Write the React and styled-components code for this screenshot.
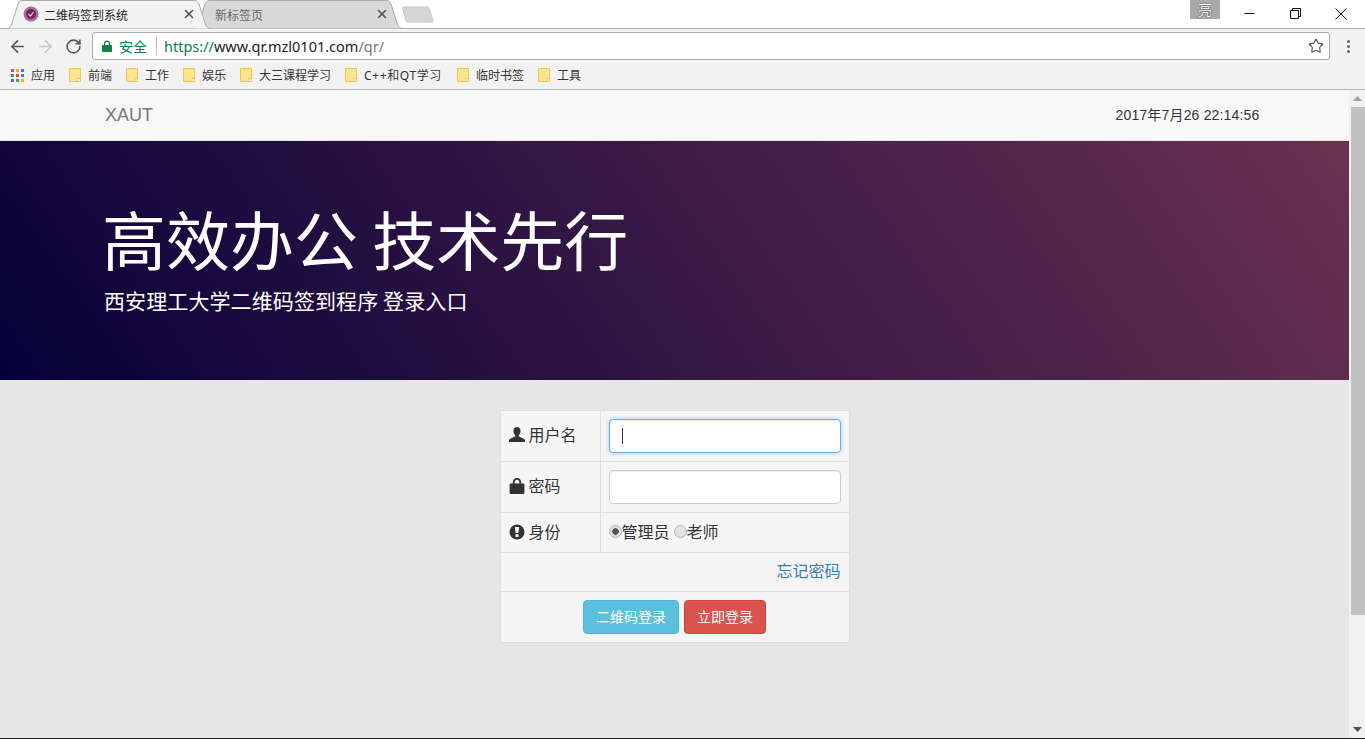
import React from "react";
import styled, { createGlobalStyle } from "styled-components";
import { ArrowLeft, ArrowRight, RotateCw, Star, X } from "lucide-react";

const cjk = `"Noto Sans CJK SC", "Liberation Sans", sans-serif`;
const ui = `"Noto Sans", "Noto Sans CJK SC", sans-serif`;

const GlobalStyle = createGlobalStyle`
  html, body {
    margin: 0;
    height: 100%;
    overflow: hidden;
    font-family: "Liberation Sans", "Noto Sans CJK SC", sans-serif;
  }
  * { box-sizing: border-box; }
`;

const Screen = styled.div`
  width: 1365px;
  height: 739px;
  display: flex;
  flex-direction: column;
  overflow: hidden;
  background: #fff;
`;

/* browser chrome */
const TabStrip = styled.div`
  height: 29px;
  flex: none;
  display: flex;
  position: relative;
  padding-left: 6px;
  background: #fff;
  border-bottom: 1px solid #aaa;
`;
const Tab = styled.div`
  position: relative;
  width: ${(p) => p.$w}px;
  height: 29px;
  margin-right: ${(p) => p.$mr || 0}px;
  display: flex;
  align-items: center;
  padding: 0 ${(p) => p.$pr}px 1px ${(p) => p.$pl}px;
  z-index: ${(p) => (p.$active ? 2 : 1)};
  svg.shape {
    position: absolute;
    left: 0;
    top: 0;
  }
`;
const Favicon = styled.svg`
  position: relative;
  width: 16px;
  height: 16px;
  margin-right: 5px;
  flex: none;
`;
const TabTitle = styled.span`
  position: relative;
  font: 12px ${cjk};
  color: ${(p) => (p.$active ? "#222" : "#666")};
  flex: 1;
  white-space: nowrap;
`;
const TabClose = styled(X)`
  position: relative;
  color: #555;
  flex: none;
`;
const NewTab = styled.svg`
  margin: 6px 0 0 -3px;
  flex: none;
`;
const WindowControls = styled.div`
  position: absolute;
  right: 1.5px;
  top: 0;
  display: flex;
  align-items: flex-start;
`;
const UserBadge = styled.div`
  width: 30px;
  height: 19px;
  margin-right: 7px;
  background: #a9a9a9;
  color: #fff;
  font: 14px/18px ${cjk};
  text-align: center;
  text-shadow: 0 0 1px #333, 0 0 1px #333;
`;
const WinButton = styled.div`
  width: 45.5px;
  height: 27px;
  display: flex;
  align-items: center;
  justify-content: center;
`;
const Toolbar = styled.div`
  height: 33px;
  flex: none;
  display: flex;
  align-items: center;
  background: #f2f2f2;
  padding: 1px 0 0 8px;
`;
const NavIcon = styled.div`
  width: 28px;
  height: 20px;
  flex: none;
  margin-right: ${(p) => p.$mr || 0}px;
  display: flex;
  align-items: center;
  padding-left: ${(p) => p.$pl || 0}px;
  color: ${(p) => (p.$off ? "#c9c9c9" : "#5a5a5a")};
`;
const Omnibox = styled.div`
  width: 1238px;
  height: 28px;
  flex: none;
  margin-left: -2px;
  display: flex;
  align-items: center;
  background: #fff;
  border: 1px solid #a9a9a9;
  border-radius: 3px;
  padding-left: 9px;
`;
const Secure = styled.span`
  font: 14px ${cjk};
  color: #0b8043;
  margin-left: 7px;
  padding-right: 9px;
  border-right: 1px solid #bbb;
  line-height: 18px;
`;
const Url = styled.span`
  font: 14.5px "Noto Sans", "Open Sans", sans-serif;
  margin-left: 7px;
  flex: 1;
  color: #0b8043;
  b { font-weight: 400; color: #222; }
  i { font-style: normal; color: #777; }
`;
const StarIcon = styled(Star)`
  color: #555;
  margin-right: 5px;
`;
const MenuDots = styled.div`
  width: 3px;
  margin-left: 17px;
  display: flex;
  flex-direction: column;
  gap: 2px;
  span {
    height: 3px;
    background: #666;
    border-radius: 50%;
  }
`;
const Bookmarks = styled.div`
  height: 28px;
  flex: none;
  display: flex;
  align-items: center;
  padding: 0 0 1px 11px;
  background: #f2f2f2;
  border-bottom: 1px solid #b4b4b4;
`;
const Bookmark = styled.div`
  display: flex;
  align-items: center;
  margin-right: ${(p) => p.$mr}px;
  svg { margin-right: 7px; flex: none; }
`;
const BookmarkLabel = styled.span`
  padding-top: 2px;
  font: 12px/16px ${ui};
  letter-spacing: ${(p) => p.$ls || 0}px;
  color: #333;
  white-space: nowrap;
`;

/* page */
const Viewport = styled.div`
  flex: 1;
  min-height: 0;
  display: flex;
`;
const Page = styled.div`
  flex: 1;
  min-width: 0;
  display: flex;
  flex-direction: column;
  background: #e6e6e6;
`;
const Navbar = styled.nav`
  height: 51px;
  flex: none;
  display: flex;
  align-items: center;
  justify-content: space-between;
  padding: 0 89.5px 0 105px;
  background: #f8f8f8;
  border-bottom: 1px solid #e7e7e7;
`;
const Brand = styled.a`
  font-size: 18px;
  color: #777;
`;
const Clock = styled.span`
  font-size: 14px;
  letter-spacing: 0.17px;
  color: #333;
  padding-bottom: 2px;
`;
const Banner = styled.header`
  height: 239px;
  flex: none;
  padding: 49px 0 0 104px;
  color: #fff;
  background: linear-gradient(55deg, #05003a 0%, #6b3150 100%);
`;
const Heading = styled.h1`
  margin: 0 0 0 -2px;
  font: 400 64px/94px ${cjk};
`;
const Lead = styled.p`
  margin: 0;
  font: 400 21px/32px ${cjk};
  letter-spacing: 0.1px;
`;
const LoginTable = styled.table`
  width: 350px;
  margin: 30px auto 0;
  border-collapse: collapse;
  table-layout: fixed;
  background: #f5f5f5;
  font: 16px ${cjk};
  color: #333;
  td {
    border: 1px solid #ddd;
    padding: 0 8px;
    vertical-align: middle;
  }
`;
const Row = styled.tr`
  height: ${(p) => p.$h}px;
`;
const LabelCell = styled.td`
  width: 100px;
  && {
    padding-bottom: 4px;
  }
  svg {
    vertical-align: -2px;
    margin-right: 4px;
  }
`;
const RightCell = styled.td`
  text-align: right;
  && {
    padding-bottom: 4px;
  }
`;
const CenterCell = styled.td`
  text-align: center;
`;
const FieldWrap = styled.div`
  position: relative;
  height: 34px;
`;
const TextInput = styled.input`
  display: block;
  width: 100%;
  height: 34px;
  padding: 6px 12px;
  background: #fff;
  border: 1px solid ${(p) => (p.$focus ? "#66afe9" : "#ccc")};
  border-radius: 4px;
  outline: none;
  box-shadow: inset 0 1px 1px rgba(0, 0, 0, 0.075)
    ${(p) => (p.$focus ? ", 0 0 4px rgba(102, 175, 233, 0.6)" : "")};
`;
const Caret = styled.span`
  position: absolute;
  left: 13px;
  top: 9px;
  width: 1px;
  height: 16px;
  background: #333;
`;
const RadioRow = styled.div`
  display: flex;
  align-items: center;
  padding-bottom: 4px;
`;
const Radio = styled.span`
  width: 13px;
  height: 13px;
  flex: none;
  margin-top: 2px;
  border-radius: 50%;
  border: 1px solid #b5b5b5;
  background: ${(p) =>
    p.$checked
      ? "radial-gradient(circle, #555 0 3px, #e0e0e0 3.6px)"
      : "#e2e2e2"};
`;
const RadioLabel = styled.span`
  margin-right: 4px;
`;
const Link = styled.a`
  color: #337ab7;
`;
const Button = styled.button`
  height: 34px;
  padding: 0 12px 2px;
  margin: 0 2.5px;
  font: 14px ${cjk};
  color: #fff;
  background: ${(p) => (p.$danger ? "#d9534f" : "#5bc0de")};
  border: 1px solid ${(p) => (p.$danger ? "#d43f3a" : "#46b8da")};
  border-radius: 4px;
`;
const Scrollbar = styled.aside`
  width: 16px;
  flex: none;
  display: flex;
  flex-direction: column;
  align-items: center;
  background: #f1f1f1;
`;
const ScrollArrow = styled.svg`
  flex: none;
  margin: ${(p) => p.$m};
`;
const ScrollThumb = styled.div`
  width: 14px;
  height: 508px;
  align-self: flex-end;
  margin-bottom: auto;
  background: #c1c1c1;
`;
const BottomEdge = styled.div`
  height: 1px;
  flex: none;
  background: #222;
`;

const TabShape = ({ w, fill, stroke }) => (
  <svg className="shape" width={w} height="29" viewBox={`0 0 ${w} 29`}>
    <path
      d={`M0 28.5 C4 28.5 5 26 6 23 L12 4 C13 1.5 14 .5 17 .5 L${w - 17} .5 C${w - 14} .5 ${w - 13} 1.5 ${w - 12} 4 L${w - 6} 23 C${w - 5} 26 ${w - 4} 28.5 ${w} 28.5`}
      fill={fill}
      stroke={stroke}
    />
  </svg>
);

const Folder = () => (
  <svg width="12" height="14" viewBox="0 0 12 14">
    <path d="M.5.5h11v13H.5z" fill="#fde58f" stroke="#eec64f" />
    <path d="M9 13.5v-3h2.5v3z" fill="#fff" stroke="#eec64f" />
  </svg>
);

const AppsGrid = () => {
  const colors = ["#e8453c", "#f4b400", "#3b78e7", "#34a853", "#e8453c", "#3b78e7", "#3b78e7", "#34a853", "#f4b400"];
  return (
    <svg width="13" height="13" viewBox="0 0 13 13">
      {colors.map((c, i) => (
        <rect key={i} x={(i % 3) * 5} y={Math.floor(i / 3) * 5} width="3" height="3" fill={c} />
      ))}
    </svg>
  );
};

const UserIcon = () => (
  <svg width="16" height="16" viewBox="0 0 16 16" fill="#333">
    <path d="M8 0c2.2 0 3.5 1.6 3.5 3.9 0 1.7-.7 3.2-1.6 4.2-.3.4-.3 1.1.2 1.5l4.6 2.1c.8.4 1.3 1 1.3 1.9V15H0v-1.400c0-.9.5-1.500 1.300-1.900l4.600-2.100c.5-.4.5-1.100.2-1.500-.9-1-1.600-2.500-1.600-4.200C4.500 1.600 5.800 0 8 0z" />
  </svg>
);

const LockIcon = () => (
  <svg width="16" height="16" viewBox="0 0 16 16" fill="#333">
    <path d="M1.500 5.500h2.300V4.200C3.800 1.700 5.500 0 8 0s4.200 1.700 4.200 4.200v1.300h2.300c.5 0 .9.4.9.9v8.700c0 .5-.4.9-.9.900h-13c-.5 0-.9-.4-.9-.9V6.400c0-.5.4-.9.900-.9zM5.600 5.500h4.800V4.200C10.400 2.700 9.400 1.700 8 1.700S5.600 2.700 5.600 4.200z" />
  </svg>
);

const AlertIcon = () => (
  <svg width="16" height="16" viewBox="0 0 16 16">
    <circle cx="8" cy="8" r="7.500" fill="#333" />
    <path d="M5.800 3h4.400l-.8 6H6.600zM6.500 10.200h3v2.700h-3z" fill="#f5f5f5" />
  </svg>
);

const bookmarks = [
  { name: "前端", mr: 14 },
  { name: "工作", mr: 14 },
  { name: "娱乐", mr: 14 },
  { name: "大三课程学习", mr: 14 },
  { name: "C++和QT学习", mr: 15, ls: 0.6 },
  { name: "临时书签", mr: 14 },
  { name: "工具", mr: 0 },
];

export default function App() {
  return (
    <Screen>
      <GlobalStyle />
      <TabStrip>
        <Tab $active $w={205} $mr={-18} $pl={17} $pr={15}>
          <TabShape w={205} fill="#f2f2f2" stroke="#a9a9a9" />
          <Favicon viewBox="0 0 16 16">
            <circle cx="8" cy="8" r="7.500" fill="#a9699a" />
            <circle cx="8" cy="8" r="5" fill="#6f2463" />
            <path d="M5.500 8l2 2 3-4" fill="none" stroke="#e9d8e6" strokeWidth="1.200" />
          </Favicon>
          <TabTitle $active>二维码签到系统</TabTitle>
          <TabClose size={14} strokeWidth={2.800} />
        </Tab>
        <Tab $w={210} $pl={22} $pr={14}>
          <TabShape w={210} fill="#d8d8d8" stroke="#a9a9a9" />
          <TabTitle>新标签页</TabTitle>
          <TabClose size={14} strokeWidth={2.800} />
        </Tab>
        <NewTab width="36" height="19" viewBox="0 0 36 19">
          <path d="M4 1h23c1 0 1.500.5 2 1.500l4 12c.3 1-.2 1.500-1 1.500H8c-1 0-1.500-.5-2-1.500L2.500 2.500C2.200 1.500 3 1 4 1z" fill="#d6d6d6" stroke="#c8c8c8" />
        </NewTab>
        <WindowControls>
          <UserBadge>亮</UserBadge>
          <WinButton>
            <svg width="11" height="11" viewBox="0 0 11 11">
              <path d="M.5 5.500h10" stroke="#111" />
            </svg>
          </WinButton>
          <WinButton>
            <svg width="11" height="11" viewBox="0 0 11 11" fill="none" stroke="#111">
              <path d="M.5 2.500h8v8h-8z" />
              <path d="M2.500 2.500V.5h8v8h-2" />
            </svg>
          </WinButton>
          <WinButton>
            <svg width="12" height="12" viewBox="0 0 12 12">
              <path d="M.5.5l11 11M11.500.5l-11 11" stroke="#111" />
            </svg>
          </WinButton>
        </WindowControls>
      </TabStrip>

      <Toolbar>
        <NavIcon>
          <ArrowLeft size={19} strokeWidth={2.200} />
        </NavIcon>
        <NavIcon $off>
          <ArrowRight size={19} strokeWidth={2.200} />
        </NavIcon>
        <NavIcon $mr={2} $pl={1}>
          <RotateCw size={17} strokeWidth={2.400} />
        </NavIcon>
        <Omnibox>
          <svg width="10" height="12" viewBox="0 0 10 12">
            <path d="M1 5h1V3.500a3 3 0 0 1 6 0V5h1a1 1 0 0 1 1 1v5a1 1 0 0 1-1 1H1a1 1 0 0 1-1-1V6a1 1 0 0 1 1-1zm2.200 0h3.600V3.500a1.800 1.800 0 0 0-3.600 0z" fill="#0b8043" />
          </svg>
          <Secure>安全</Secure>
          <Url>
            https://<b>www.qr.mzl0101.com</b>
            <i>/qr/</i>
          </Url>
          <StarIcon size={16} strokeWidth={1.700} />
        </Omnibox>
        <MenuDots>
          <span />
          <span />
          <span />
        </MenuDots>
      </Toolbar>

      <Bookmarks>
        <Bookmark $mr={14}>
          <AppsGrid />
          <BookmarkLabel>应用</BookmarkLabel>
        </Bookmark>
        {bookmarks.map((b) => (
          <Bookmark key={b.name} $mr={b.mr}>
            <Folder />
            <BookmarkLabel $ls={b.ls}>{b.name}</BookmarkLabel>
          </Bookmark>
        ))}
      </Bookmarks>

      <Viewport>
        <Page>
          <Navbar>
            <Brand>XAUT</Brand>
            <Clock>2017年7月26 22:14:56</Clock>
          </Navbar>
          <Banner>
            <Heading>高效办公 技术先行</Heading>
            <Lead>西安理工大学二维码签到程序 登录入口</Lead>
          </Banner>
          <LoginTable>
            <tbody>
              <Row $h={51}>
                <LabelCell>
                  <UserIcon />
                  用户名
                </LabelCell>
                <td>
                  <FieldWrap>
                    <TextInput $focus />
                    <Caret />
                  </FieldWrap>
                </td>
              </Row>
              <Row $h={51}>
                <LabelCell>
                  <LockIcon />
                  密码
                </LabelCell>
                <td>
                  <FieldWrap>
                    <TextInput type="password" />
                  </FieldWrap>
                </td>
              </Row>
              <Row $h={40}>
                <LabelCell>
                  <AlertIcon />
                  身份
                </LabelCell>
                <td>
                  <RadioRow>
                    <Radio $checked />
                    <RadioLabel>管理员</RadioLabel>
                    <Radio />
                    <RadioLabel>老师</RadioLabel>
                  </RadioRow>
                </td>
              </Row>
              <Row $h={39}>
                <RightCell colSpan={2}>
                  <Link>忘记密码</Link>
                </RightCell>
              </Row>
              <Row $h={51}>
                <CenterCell colSpan={2}>
                  <Button>二维码登录</Button>
                  <Button $danger>立即登录</Button>
                </CenterCell>
              </Row>
            </tbody>
          </LoginTable>
        </Page>
        <Scrollbar>
          <ScrollArrow $m="6px 0 6px" width="9" height="5" viewBox="0 0 9 5">
            <path d="M4.500 0L9 5H0z" fill="#a3a3a3" />
          </ScrollArrow>
          <ScrollThumb />
          <ScrollArrow $m="0 0 6px" width="9" height="5" viewBox="0 0 9 5">
            <path d="M4.500 5L0 0h9z" fill="#505050" />
          </ScrollArrow>
        </Scrollbar>
      </Viewport>
      <BottomEdge />
    </Screen>
  );
}
